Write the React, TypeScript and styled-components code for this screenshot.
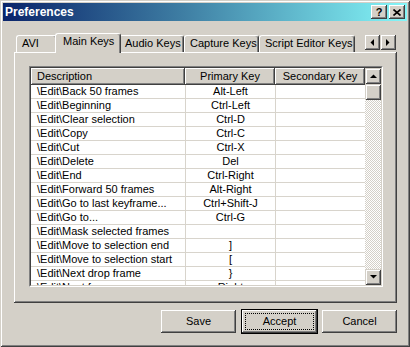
import React from 'react'
import styled, { createGlobalStyle } from 'styled-components'

// Classic Win2000 palette
const FACE = '#d4d0c8'
const SHADOW = '#808080'
const DARK = '#404040'
const GRID = '#d8d4cc'

const GlobalStyle = createGlobalStyle`
  html, body { margin: 0; padding: 0; background: ${FACE}; }
  body {
    font-family: 'Liberation Sans', Arial, sans-serif;
    font-size: 11px;
    color: #000;
  }
  * { box-sizing: border-box; }
`

const tabs = [
  { label: 'AVI', width: 41 },
  { label: 'Main Keys', width: 62, active: true },
  { label: 'Audio Keys', width: 65 },
  { label: 'Capture Keys', width: 75 },
  { label: 'Script Editor Keys', width: 96 }
]

const rows: [string, string][] = [
  ['\\Edit\\Back 50 frames', 'Alt-Left'],
  ['\\Edit\\Beginning', 'Ctrl-Left'],
  ['\\Edit\\Clear selection', 'Ctrl-D'],
  ['\\Edit\\Copy', 'Ctrl-C'],
  ['\\Edit\\Cut', 'Ctrl-X'],
  ['\\Edit\\Delete', 'Del'],
  ['\\Edit\\End', 'Ctrl-Right'],
  ['\\Edit\\Forward 50 frames', 'Alt-Right'],
  ['\\Edit\\Go to last keyframe...', 'Ctrl+Shift-J'],
  ['\\Edit\\Go to...', 'Ctrl-G'],
  ['\\Edit\\Mask selected frames', ''],
  ['\\Edit\\Move to selection end', ']'],
  ['\\Edit\\Move to selection start', '['],
  ['\\Edit\\Next drop frame', '}'],
  ['\\Edit\\Next frame', 'Right']
]

const Arrow = ({ dir }: { dir: 'up' | 'down' | 'left' | 'right' }) => {
  const pts = {
    up: '0,4 7,4 3.5,0.5',
    down: '0,0 7,0 3.5,3.5',
    left: '4,0 4,7 0.5,3.5',
    right: '0,0 0,7 3.5,3.5'
  }[dir]
  const vertical = dir === 'up' || dir === 'down'
  return (
    <svg width={vertical ? 7 : 4} height={vertical ? 4 : 7} viewBox={vertical ? '0 0 7 4' : '0 0 4 7'}>
      <polygon points={pts} fill="#000" />
    </svg>
  )
}

const App: React.FC = () => {
  return (
    <>
      <GlobalStyle />
      <Window>
        <TitleBar>
          <Title>Preferences</Title>
          <TitleButtons>
            <CaptionButton>?</CaptionButton>
            <CaptionButton>
              <svg width="8" height="7" viewBox="0 0 8 7">
                <path d="M0.5 0.5 L7.5 6.5 M7.5 0.5 L0.5 6.5" stroke="#000" strokeWidth="1.6" />
              </svg>
            </CaptionButton>
          </TitleButtons>
        </TitleBar>

        <Body>
          <TabRow>
            {tabs.map((t) => (
              <Tab key={t.label} $w={t.width} $active={t.active}>
                {t.label}
              </Tab>
            ))}
            <TabScroll>
              <SmallButton>
                <Arrow dir="left" />
              </SmallButton>
              <SmallButton>
                <Arrow dir="right" />
              </SmallButton>
            </TabScroll>
          </TabRow>

          <Panel>
            <List>
              <ListInner>
                <Grid>
                  <HeaderRow>
                    <HeaderCell $w={154} $left>
                      Description
                    </HeaderCell>
                    <HeaderCell $w={90}>Primary Key</HeaderCell>
                    <HeaderCell $w={90}>Secondary Key</HeaderCell>
                  </HeaderRow>
                  {rows.map(([desc, key]) => (
                    <Row key={desc}>
                      <Cell $w={155} $left>
                        {desc}
                      </Cell>
                      <Cell $w={90}>{key}</Cell>
                      <Cell $last />
                    </Row>
                  ))}
                </Grid>
                <ScrollBar>
                  <SmallButton>
                    <Arrow dir="up" />
                  </SmallButton>
                  <Thumb />
                  <Track />
                  <SmallButton>
                    <Arrow dir="down" />
                  </SmallButton>
                </ScrollBar>
              </ListInner>
            </List>
          </Panel>

          <ButtonRow>
            <PushButton>
              <FocusRing>Save</FocusRing>
            </PushButton>
            <PushButton $default>
              <FocusRing $focused>Accept</FocusRing>
            </PushButton>
            <PushButton>
              <FocusRing>Cancel</FocusRing>
            </PushButton>
          </ButtonRow>
        </Body>
      </Window>
    </>
  )
}

const raised = `
  box-shadow: inset -1px -1px ${DARK}, inset 1px 1px #fff, inset -2px -2px ${SHADOW};
`

const Window = styled.div`
  width: 410px;
  height: 347px;
  padding: 3px;
  background: ${FACE};
  display: flex;
  flex-direction: column;
  box-shadow: inset 1px 1px ${FACE}, inset -1px -1px ${DARK}, inset 2px 2px #fff, inset -2px -2px ${SHADOW};
`

const TitleBar = styled.div`
  height: 18px;
  display: flex;
  align-items: flex-start;
  padding: 0 2px;
  background: linear-gradient(90deg, #0a246a 0%, #3f7fa4 45%, #84f6f8 100%);
`

const Title = styled.div`
  color: #fff;
  font-weight: bold;
  font-size: 12px;
  line-height: 18px;
`

const TitleButtons = styled.div`
  margin-left: auto;
  margin-top: 2px;
  display: flex;
  gap: 2px;
`

const CaptionButton = styled.div`
  width: 16px;
  height: 14px;
  background: ${FACE};
  display: flex;
  align-items: center;
  justify-content: center;
  font-weight: bold;
  font-size: 11px;
  line-height: 14px;
  ${raised}
`

const Body = styled.div`
  flex: 1;
  display: flex;
  flex-direction: column;
  padding: 12px 10px 0 11px;
`

const TabRow = styled.div`
  height: 19px;
  display: flex;
  align-items: flex-end;
  padding: 0 1px 0 2px;
`

const Tab = styled.div<{ $w: number; $active?: boolean }>`
  width: ${(p) => (p.$active ? p.$w + 4 : p.$w)}px;
  height: ${(p) => (p.$active ? 20 : 17)}px;
  margin: 0 ${(p) => (p.$active ? -2 : 0)}px ${(p) => (p.$active ? -1 : 0)}px;
  padding: 1px 0 0 ${(p) => (p.$active ? 7 : 5)}px;
  border-top: 1px solid #fff;
  border-left: 1px solid #fff;
  border-right: 1px solid ${DARK};
  border-radius: 3px 3px 0 0;
  box-shadow: inset -1px 0 ${SHADOW};
  background: ${FACE};
  line-height: 13px;
  white-space: nowrap;
  position: relative;
  z-index: ${(p) => (p.$active ? 1 : 0)};
`

const TabScroll = styled.div`
  margin-left: auto;
  align-self: flex-start;
  margin-top: 1px;
  display: flex;
`

const SmallButton = styled.div`
  width: 16px;
  height: 16px;
  flex-shrink: 0;
  background: ${FACE};
  display: flex;
  align-items: center;
  justify-content: center;
  box-shadow: inset 1px 1px ${FACE}, inset -1px -1px ${DARK}, inset 2px 2px #fff, inset -2px -2px ${SHADOW};
`

const Panel = styled.div`
  height: 251px;
  padding: 14px 14px 16px 15px;
  background: ${FACE};
  ${raised}
`

const List = styled.div`
  height: 221px;
  border: 1px solid;
  border-color: ${SHADOW} #fff #fff ${SHADOW};
`

const ListInner = styled.div`
  height: 100%;
  display: flex;
  border: 1px solid;
  border-color: ${DARK} ${FACE} ${FACE} ${DARK};
  background: #fff;
`

const Grid = styled.div`
  flex: 1;
  overflow: hidden;
  display: flex;
  flex-direction: column;
`

const HeaderRow = styled.div`
  display: flex;
  flex-shrink: 0;
  height: 17px;
  background: ${FACE};
`

const HeaderCell = styled.div<{ $w: number; $left?: boolean }>`
  width: ${(p) => p.$w}px;
  flex-shrink: 0;
  height: 17px;
  padding: 2px ${(p) => (p.$left ? '0 0 6px' : '0 0 0')};
  text-align: ${(p) => (p.$left ? 'left' : 'center')};
  line-height: 13px;
  white-space: nowrap;
  ${raised}
`

const Row = styled.div`
  display: flex;
  flex-shrink: 0;
  height: 14px;
  border-bottom: 1px solid ${GRID};
`

const Cell = styled.div<{ $w?: number; $left?: boolean; $last?: boolean }>`
  ${(p) => (p.$last ? 'flex: 1;' : `width: ${p.$w}px; flex-shrink: 0; border-right: 1px solid ${GRID};`)}
  padding-left: ${(p) => (p.$left ? 6 : 0)}px;
  text-align: ${(p) => (p.$left ? 'left' : 'center')};
  line-height: 13px;
  white-space: nowrap;
  overflow: hidden;
`

const ScrollBar = styled.div`
  width: 16px;
  display: flex;
  flex-direction: column;
`

const Thumb = styled(SmallButton)``

const Track = styled.div`
  flex: 1;
  background-color: #fff;
  background-image: repeating-conic-gradient(${FACE} 0% 25%, #fff 0% 50%);
  background-size: 2px 2px;
`

const ButtonRow = styled.div`
  margin-top: 7px;
  display: flex;
  justify-content: flex-end;
  gap: 6px;
`

const PushButton = styled.div<{ $default?: boolean }>`
  width: 75px;
  height: 23px;
  padding: 3px;
  display: flex;
  background: ${FACE};
  margin-right: ${(p) => (p.$default ? -1 : 0)}px;
  box-shadow: ${(p) => (p.$default ? '0 0 0 1px #000, ' : '')}inset -1px -1px ${DARK}, inset 1px 1px #fff,
    inset -2px -2px ${SHADOW};
`

const FocusRing = styled.span<{ $focused?: boolean }>`
  flex: 1;
  display: flex;
  align-items: center;
  justify-content: center;
  line-height: 13px;
  border: 1px dotted ${(p) => (p.$focused ? '#000' : 'transparent')};
`

export default App
